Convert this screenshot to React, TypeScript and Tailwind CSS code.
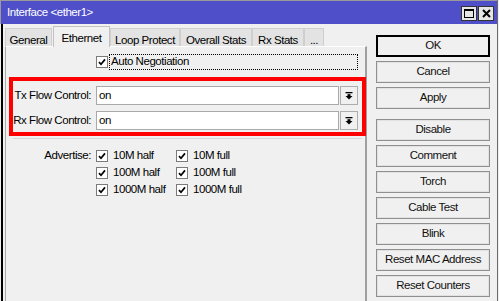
import React from "react";

function Check() {
  return (
    <span className="flex h-[12px] w-[12px] shrink-0 items-center justify-center border border-[#7a7a7a] bg-white">
      <svg width="8" height="8" viewBox="0 0 8 8">
        <path d="M1 4.2 L3 6.3 L7 1.4" stroke="#000" strokeWidth="1.7" fill="none" />
      </svg>
    </span>
  );
}

function DropBtn() {
  return (
    <div className="ml-[1px] flex h-full w-[18px] items-center justify-center border border-[#adadad] bg-[#f0f0f0]">
      <svg width="8" height="8" viewBox="0 0 8 8">
        <rect x="0.5" y="0" width="7" height="1.3" fill="#000" />
        <rect x="2.5" y="2.2" width="3" height="1.8" fill="#000" />
        <polygon points="0.5,4 7.5,4 4,7.6" fill="#000" />
      </svg>
    </div>
  );
}

function Btn({ label, def = false }: { label: string; def?: boolean }) {
  return (
    <div
      className={
        "flex h-[22px] w-[114px] items-center justify-center bg-[#f0f0f0] text-[#111] " +
        (def ? "border-2 border-black" : "border border-[#8f8f8f] shadow-[inset_0_0_0_1px_#e2e2e2]")
      }
    >
      {label}
    </div>
  );
}

const tabs: { label: string; w: string; sel?: boolean }[] = [
  { label: "General", w: "w-[47px]" },
  { label: "Ethernet", w: "w-[57px] ml-[1px]", sel: true },
  { label: "Loop Protect", w: "w-[70px]" },
  { label: "Overall Stats", w: "w-[72px]" },
  { label: "Rx Stats", w: "w-[52px]" },
  { label: "...", w: "w-[20px]" },
];

export default function App() {
  return (
    <div className="relative h-[301px] w-[499px] overflow-hidden bg-[#f0f0f0] font-['Liberation_Sans',Arial,sans-serif] text-[11.5px] tracking-[-0.45px] text-black">
      <div className="flex h-full w-[498px] flex-col border-r border-[#6a6a6a]">
        {/* title bar */}
        <div className="flex h-[24px] shrink-0 items-center border-l border-t border-[#9a9a9a] bg-[#4f50c9] pl-[6px] pr-[3px]">
          <span className="pt-[1px] text-white">Interface &lt;ether1&gt;</span>
          <div className="ml-auto flex gap-[1px] pt-[2px]">
            <div className="flex h-[15px] w-[16px] items-center justify-center border border-[#333] bg-[#e6e6e6]">
              <span className="block h-[9px] w-[10px] border border-t-2 border-black" />
            </div>
            <div className="flex h-[15px] w-[16px] items-center justify-center border border-[#333] bg-[#e6e6e6]">
              <svg width="9" height="9" viewBox="0 0 9 9">
                <path d="M1 1 L8 8 M8 1 L1 8" stroke="#000" strokeWidth="2" />
              </svg>
            </div>
          </div>
        </div>
        {/* body */}
        <div className="ml-[1px] flex flex-1 border-l-2 border-black">
          <div className="flex flex-col pl-[2px]">
            <div className="flex h-[22px] items-end">
              {tabs.map((t) =>
                t.sel ? (
                  <div
                    key={t.label}
                    className={t.w + " relative z-10 mb-[-1px] flex h-[21px] justify-center border border-b-0 border-[#c2c2c2] bg-[#f0f0f0] pt-[3px]"}
                  >
                    {t.label}
                  </div>
                ) : (
                  <div
                    key={t.label}
                    className={t.w + " flex h-[18px] justify-center border border-b-0 border-[#cfcfcf] bg-[#e3e3e3] pt-[3px]"}
                  >
                    {t.label}
                  </div>
                )
              )}
            </div>
            <div className="w-[362px] flex-1 border-l border-r-2 border-t border-l-[#a9a9a9] border-r-[#a0a0a0] border-t-[#ffffff] bg-[#f0f0f0]">
              <div className="flex h-[16px] items-center pl-[90px] mt-[7px]">
                <Check />
                <div className="ml-[1px] flex h-[16px] w-[249px] items-center border border-dotted border-black pl-[1px]">
                  Auto Negotiation
                </div>
              </div>
              <div className="mt-[16px] flex h-[19px] items-center">
                <div className="w-[85px] text-right">Tx Flow Control:</div>
                <div className="ml-[5px] flex h-full w-[243px] items-center border border-[#a9a9a9] bg-white pl-[2px]">on</div>
                <DropBtn />
              </div>
              <div className="mt-[6px] flex h-[19px] items-center">
                <div className="w-[85px] text-right">Rx Flow Control:</div>
                <div className="ml-[5px] flex h-full w-[243px] items-center border border-[#a9a9a9] bg-white pl-[2px]">on</div>
                <DropBtn />
              </div>
              <div className="ml-[7px] mt-[8px] h-px w-[349px] bg-[#d5d5d5]" />
              <div className="mt-[8px] flex">
                <div className="flex h-[17px] w-[85px] items-center justify-end">Advertise:</div>
                <div className="ml-[5px] grid grid-cols-[80px_80px]">
                  {["10M half", "10M full", "100M half", "100M full", "1000M half", "1000M full"].map((l) => (
                    <div key={l} className="flex h-[17px] items-center gap-[5px]">
                      <Check />
                      <span>{l}</span>
                    </div>
                  ))}
                </div>
              </div>
            </div>
          </div>
          <div className="ml-[9px] flex flex-col pt-[11px]">
            <div className="flex flex-col gap-[4px]">
              <Btn label="OK" def />
              <Btn label="Cancel" />
              <Btn label="Apply" />
            </div>
            <div className="mt-[10px] flex flex-col gap-[4px]">
              <Btn label="Disable" />
              <Btn label="Comment" />
              <Btn label="Torch" />
              <Btn label="Cable Test" />
              <Btn label="Blink" />
              <Btn label="Reset MAC Address" />
              <Btn label="Reset Counters" />
            </div>
          </div>
        </div>
      </div>
      {/* annotation highlight */}
      <div className="pointer-events-none absolute left-[9px] top-[77px] h-[59px] w-[357px] border-4 border-[#ff0000]" />
    </div>
  );
}
